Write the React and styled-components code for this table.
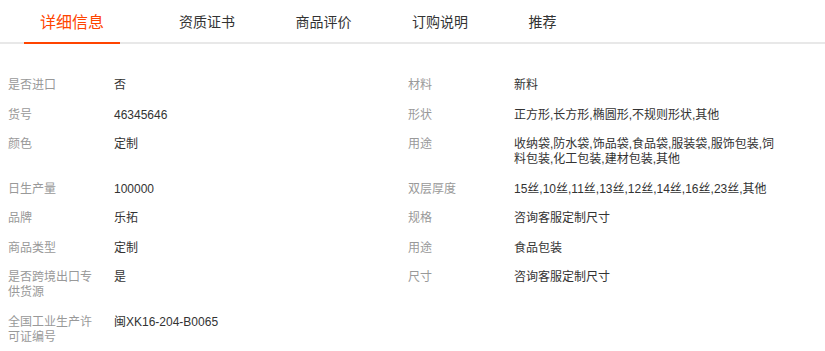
import React from "react";
import styled, { createGlobalStyle } from "styled-components";

const GlobalStyle = createGlobalStyle`
  html, body {
    margin: 0;
    padding: 0;
    background: #fff;
  }
  body {
    font-family: "Liberation Sans", "Noto Sans CJK SC", Arial, sans-serif;
    color: #333;
  }
`;

const Page = styled.div`
  width: 825px;
  background: #fff;
`;

const TabBar = styled.div`
  display: flex;
  align-items: stretch;
  height: 42px;
  padding-left: 24px;
  border-bottom: 2px solid #e8e8e8;
`;

const Tab = styled.div`
  position: relative;
  display: flex;
  align-items: center;
  padding: 0 16px;
  margin-right: ${(p) => (p.$active ? "43px" : "28.5px")};
  font-size: ${(p) => (p.$active ? "16px" : "14px")};
  color: ${(p) => (p.$active ? "#ff4400" : "#333")};
  white-space: nowrap;
  cursor: pointer;

  &::after {
    content: "";
    display: ${(p) => (p.$active ? "block" : "none")};
    position: absolute;
    left: 0;
    right: 0;
    bottom: -2px;
    height: 2px;
    background: #ff4400;
  }
`;

const Attributes = styled.div`
  display: grid;
  grid-template-columns: 400px 400px;
  row-gap: 14.5px;
  padding: 34px 0 0 8px;
  font-size: 12px;
  line-height: 15px;
`;

const Item = styled.div`
  display: flex;
  padding-right: 28px;
`;

const Label = styled.div`
  flex: 0 0 90px;
  margin-right: 16px;
  color: #999;
`;

const Value = styled.div`
  flex: 1;
  color: #333;
`;

const tabs = ["详细信息", "资质证书", "商品评价", "订购说明", "推荐"];

const rows = [
  [["是否进口", "否"], ["材料", "新料"]],
  [["货号", "46345646"], ["形状", "正方形,长方形,椭圆形,不规则形状,其他"]],
  [["颜色", "定制"], ["用途", "收纳袋,防水袋,饰品袋,食品袋,服装袋,服饰包装,饲料包装,化工包装,建材包装,其他"]],
  [["日生产量", "100000"], ["双层厚度", "15丝,10丝,11丝,13丝,12丝,14丝,16丝,23丝,其他"]],
  [["品牌", "乐拓"], ["规格", "咨询客服定制尺寸"]],
  [["商品类型", "定制"], ["用途", "食品包装"]],
  [["是否跨境出口专供货源", "是"], ["尺寸", "咨询客服定制尺寸"]],
  [["全国工业生产许可证编号", "闽XK16-204-B0065"], null],
];

export default function App() {
  return (
    <Page>
      <GlobalStyle />
      <TabBar>
        {tabs.map((t, i) => (
          <Tab key={t} $active={i === 0}>
            {t}
          </Tab>
        ))}
      </TabBar>
      <Attributes>
        {rows.flatMap((pair, r) =>
          pair.map((cell, c) =>
            cell ? (
              <Item key={`${r}-${c}`}>
                <Label>{cell[0]}</Label>
                <Value>{cell[1]}</Value>
              </Item>
            ) : (
              <Item key={`${r}-${c}`} />
            )
          )
        )}
      </Attributes>
    </Page>
  );
}
